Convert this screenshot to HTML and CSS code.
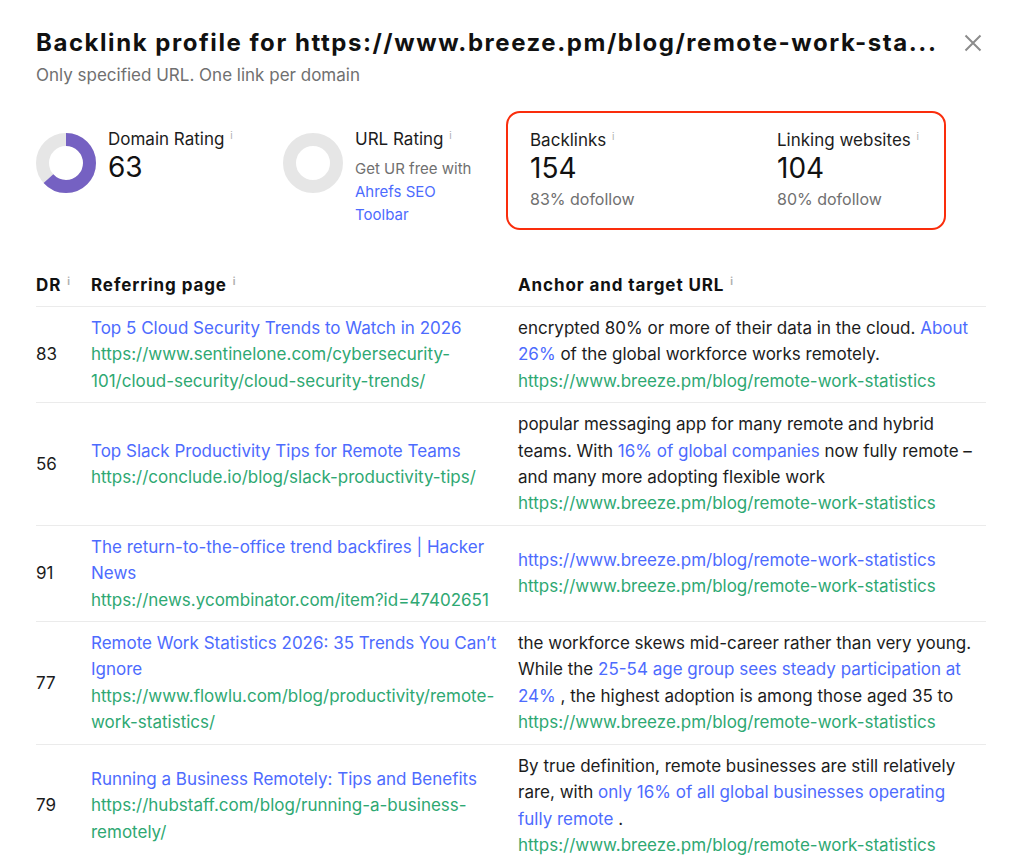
FILE: index.html
```html
<!DOCTYPE html>
<html lang="en">
<head>
<meta charset="utf-8">
<title>Backlink profile</title>
<link rel="stylesheet" href="styles.css">
</head>
<body>
<div class="modal">
  <div class="header">
    <h1 class="title">Backlink profile for https://www.breeze.pm/blog/remote-work-sta...</h1>
    <button class="close" aria-label="Close">
      <svg width="18" height="18" viewBox="0 0 18 18"><path d="M1.5 1.5L16.5 16.5M16.5 1.5L1.5 16.5" stroke="#8c8c8c" stroke-width="2" fill="none"/></svg>
    </button>
  </div>
  <p class="subtitle">Only specified URL. One link per domain</p>

  <div class="stats">
    <div class="stat stat-dr">
      <svg class="donut" width="60" height="60" viewBox="0 0 60 60">
        <circle cx="30" cy="30" r="23.5" fill="none" stroke="#e6e6e6" stroke-width="13"/>
        <circle cx="30" cy="30" r="23.5" fill="none" stroke="#7561c2" stroke-width="13" stroke-dasharray="93 148" transform="rotate(-90 30 30)"/>
      </svg>
      <div class="stat-text">
        <div class="label">Domain Rating <span class="info">i</span></div>
        <div class="value">63</div>
      </div>
    </div>
    <div class="stat stat-ur">
      <svg class="donut" width="60" height="60" viewBox="0 0 60 60">
        <circle cx="30" cy="30" r="23.5" fill="none" stroke="#e6e6e6" stroke-width="13"/>
      </svg>
      <div class="stat-text">
        <div class="label">URL Rating <span class="info">i</span></div>
        <div class="ur-note">Get UR free with <a href="#" class="link">Ahrefs SEO Toolbar</a></div>
      </div>
    </div>
    <div class="highlight">
      <div class="hl-item">
        <div class="label">Backlinks <span class="info">i</span></div>
        <div class="value">154</div>
        <div class="muted">83% dofollow</div>
      </div>
      <div class="hl-item">
        <div class="label">Linking websites <span class="info">i</span></div>
        <div class="value">104</div>
        <div class="muted">80% dofollow</div>
      </div>
    </div>
  </div>

  <div class="table">
    <div class="row head">
      <div class="cell">DR <span class="info">i</span></div>
      <div class="cell">Referring page <span class="info">i</span></div>
      <div class="cell">Anchor and target URL <span class="info">i</span></div>
    </div>

    <div class="row">
      <div class="cell dr">83</div>
      <div class="cell ref">
        <a href="#" class="link">Top 5 Cloud Security Trends to Watch in 2026</a>
        <span class="url">https://www.sentinelone.com/cybersecurity-101/cloud-security/cloud-security-trends/</span>
      </div>
      <div class="cell anchor">
        encrypted 80% or more of their data in the cloud. <a href="#" class="link">About 26%</a> of the global workforce works remotely.
        <span class="url">https://www.breeze.pm/blog/remote-work-statistics</span>
      </div>
    </div>

    <div class="row">
      <div class="cell dr">56</div>
      <div class="cell ref">
        <a href="#" class="link">Top Slack Productivity Tips for Remote Teams</a>
        <span class="url">https://conclude.io/blog/slack-productivity-tips/</span>
      </div>
      <div class="cell anchor">
        popular messaging app for many remote and hybrid teams. With <a href="#" class="link">16% of global companies</a> now fully remote – and many more adopting flexible work
        <span class="url">https://www.breeze.pm/blog/remote-work-statistics</span>
      </div>
    </div>

    <div class="row">
      <div class="cell dr">91</div>
      <div class="cell ref">
        <a href="#" class="link">The return-to-the-office trend backfires | Hacker News</a>
        <span class="url">https://news.ycombinator.com/item?id=47402651</span>
      </div>
      <div class="cell anchor">
        <a href="#" class="link block">https://www.breeze.pm/blog/remote-work-statistics</a>
        <span class="url">https://www.breeze.pm/blog/remote-work-statistics</span>
      </div>
    </div>

    <div class="row">
      <div class="cell dr">77</div>
      <div class="cell ref">
        <a href="#" class="link">Remote Work Statistics 2026: 35 Trends You Can’t Ignore</a>
        <span class="url">https://www.flowlu.com/blog/productivity/remote-work-statistics/</span>
      </div>
      <div class="cell anchor">
        the workforce skews mid-career rather than very young. While the <a href="#" class="link">25-54 age group sees steady participation at 24%</a> , the highest adoption is among those aged 35 to
        <span class="url">https://www.breeze.pm/blog/remote-work-statistics</span>
      </div>
    </div>

    <div class="row">
      <div class="cell dr">79</div>
      <div class="cell ref">
        <a href="#" class="link">Running a Business Remotely: Tips and Benefits</a>
        <span class="url">https://hubstaff.com/blog/running-a-business-remotely/</span>
      </div>
      <div class="cell anchor">
        By true definition, remote businesses are still relatively rare, with <a href="#" class="link">only 16% of all global businesses operating fully remote</a> .
        <span class="url">https://www.breeze.pm/blog/remote-work-statistics</span>
      </div>
    </div>
  </div>
</div>
</body>
</html>
```

FILE: styles.css
```css
* { box-sizing: border-box; }
html, body { margin: 0; background: #fff; }
body {
  font-family: Inter, "Noto Sans", "Liberation Sans", sans-serif;
  color: #1c1c1c;
  font-size: 17px;
}
.modal {
  padding: 28px 38px 0 36px;
  overflow: hidden;
  height: 862px;
}
.header {
  display: flex;
  justify-content: space-between;
  align-items: center;
}
.title {
  margin: 0;
  font-size: 24px;
  line-height: 30px;
  font-weight: 700;
  letter-spacing: 1.55px;
  white-space: nowrap;
  color: #111;
}
.close {
  border: 0;
  background: none;
  padding: 0;
  margin-right: 4px;
  width: 18px;
  height: 18px;
  display: flex;
}
.subtitle {
  margin: 6px 0 0;
  font-size: 17px;
  line-height: 22px;
  color: #707070;
}
.stats {
  display: flex;
  align-items: flex-start;
  margin-top: 25px;
}
.stat {
  display: flex;
  gap: 12px;
  padding-top: 13px;
}
.stat-dr { width: 247px; }
.stat-ur { width: 223px; }
.donut { margin-top: 9px; flex: none; }
.label {
  font-size: 17px;
  line-height: 22px;
  color: #1c1c1c;
}
.info {
  font-size: 10px;
  color: #b0b0b0;
  vertical-align: 6px;
  margin-left: 1px;
}
.value {
  font-size: 28px;
  line-height: 34px;
  color: #111;
}
.ur-note {
  width: 125px;
  font-size: 15px;
  line-height: 23px;
  color: #707070;
  margin-top: 7px;
}
.link { color: #4d6bfe; text-decoration: none; }
.block { display: block; }
.highlight {
  border: 2px solid #fa2d0c;
  border-radius: 14px;
  padding: 12px 22px 18px;
  display: grid;
  grid-template-columns: 247px 147px;
  width: 440px;
}
.muted {
  color: #707070;
  font-size: 16px;
  line-height: 22px;
  margin-top: 3px;
}
.table {
  margin-top: 32px;
  width: 950px;
}
.row {
  display: grid;
  grid-template-columns: 55px 427px 1fr;
  border-top: 1px solid #ebebeb;
  align-items: center;
}
.row.head {
  border-top: 0;
  font-weight: 700;
  color: #111;
  letter-spacing: 0.9px;
}
.row.head .cell {
  padding: 8px 0 10px;
  line-height: 22px;
}
.cell {
  padding: 8px 0;
  line-height: 26.4px;
}
.ref { padding-right: 14px; }
.anchor { color: #1c1c1c; padding-right: 5px; }
.url { display: block; color: #2ea872; }
```
